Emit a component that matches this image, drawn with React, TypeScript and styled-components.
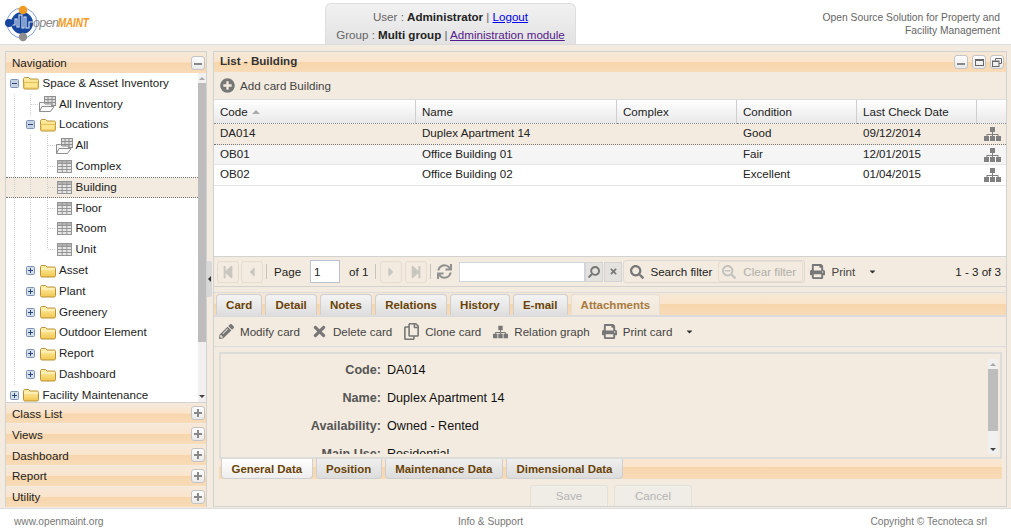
import React from "react";
import styled, { createGlobalStyle } from "styled-components";
import {
  FaPlusCircle,
  FaPencilAlt,
  FaTimes,
  FaRegCopy,
  FaPrint,
  FaSearch,
  FaSearchMinus,
  FaStepBackward,
  FaStepForward,
  FaCaretLeft,
  FaCaretRight,
  FaCaretDown,
  FaSync,
} from "react-icons/fa";

const BAND = "linear-gradient(to bottom, #f5e8d8 0%, #fbe4cb 48%, #f7d6ac 52%, #f8dbb8 100%)";
const LINE = "#d2d2d0";

const GlobalStyle = createGlobalStyle`
  html, body {
    margin: 0;
    padding: 0;
    background: #f3ebdf;
  }
  body {
    font-family: "Liberation Sans", Arial, sans-serif;
    font-size: 11.6px;
    color: #222;
    overflow: hidden;
  }
`;

type TreeNode = {
  label: string;
  depth: number;
  toggle?: "plus" | "minus";
  icon: "folder" | "table" | "view";
  selected?: boolean;
  end?: boolean;
};

const treeNodes: TreeNode[] = [
  { label: "Space & Asset Inventory", depth: 0, toggle: "minus", icon: "folder" },
  { label: "All Inventory", depth: 1, icon: "view" },
  { label: "Locations", depth: 1, toggle: "minus", icon: "folder" },
  { label: "All", depth: 2, icon: "view" },
  { label: "Complex", depth: 2, icon: "table" },
  { label: "Building", depth: 2, icon: "table", selected: true },
  { label: "Floor", depth: 2, icon: "table" },
  { label: "Room", depth: 2, icon: "table" },
  { label: "Unit", depth: 2, icon: "table", end: true },
  { label: "Asset", depth: 1, toggle: "plus", icon: "folder" },
  { label: "Plant", depth: 1, toggle: "plus", icon: "folder" },
  { label: "Greenery", depth: 1, toggle: "plus", icon: "folder" },
  { label: "Outdoor Element", depth: 1, toggle: "plus", icon: "folder" },
  { label: "Report", depth: 1, toggle: "plus", icon: "folder" },
  { label: "Dashboard", depth: 1, toggle: "plus", icon: "folder" },
  { label: "Facility Maintenance", depth: 0, toggle: "plus", icon: "folder" },
];

const accordionItems = ["Class List", "Views", "Dashboard", "Report", "Utility"];

const columns = ["Code", "Name", "Complex", "Condition", "Last Check Date", ""];

const buildings = [
  { code: "DA014", name: "Duplex Apartment 14", condition: "Good", date: "09/12/2014" },
  { code: "OB01", name: "Office Building 01", condition: "Fair", date: "12/01/2015" },
  { code: "OB02", name: "Office Building 02", condition: "Excellent", date: "01/04/2015" },
];

const cardTabs = ["Card", "Detail", "Notes", "Relations", "History", "E-mail"];
const formTabs = ["General Data", "Position", "Maintenance Data", "Dimensional Data"];
const fields = [
  ["Code", "DA014"],
  ["Name", "Duplex Apartment 14"],
  ["Availability", "Owned - Rented"],
  ["Main Use", "Residential"],
];

const FolderIcon = ({ open }: { open?: boolean }) => (
  <svg width="16" height="14" viewBox="0 0 16 14">
    <defs>
      <linearGradient id="fold" x1="0" y1="0" x2="0" y2="1">
        <stop offset="0" stopColor="#fff2b0" />
        <stop offset="1" stopColor="#f2c64e" />
      </linearGradient>
    </defs>
    <path
      d="M0.5 3.2 C0.5 2 1.1 1.5 2.1 1.5 H5.6 L7 3 H14 C15 3 15.5 3.5 15.5 4.4 V11.4 C15.5 12.4 15 13 14 13 H2 C1 13 0.5 12.4 0.5 11.4 Z"
      fill="url(#fold)"
      stroke="#b8923a"
    />
    {open ? (
      <path d="M1 6.5 H15 L14.8 12 H1.3 Z" fill="#fbe58e" stroke="#e6c25c" />
    ) : (
      <path d="M1.2 5 H14.8" stroke="#fff8d4" fill="none" />
    )}
  </svg>
);

const TableIcon = () => (
  <svg width="15" height="13" viewBox="0 0 15 13">
    <rect x="0.5" y="0.5" width="14" height="12" fill="#e6e6e6" stroke="#969696" />
    <rect x="1" y="1" width="13" height="2.5" fill="#b4b4b4" />
    <path d="M0.5 3.5H14.5M0.5 6.5H14.5M0.5 9.5H14.5M5.2 0.5V12.5M9.8 0.5V12.5" stroke="#969696" fill="none" />
  </svg>
);

const ViewIcon = () => (
  <svg width="17" height="16" viewBox="0 0 17 16">
    <rect x="5.5" y="0.5" width="11" height="9" fill="#dedede" stroke="#8e8e8e" />
    <path d="M5.5 3.5H16.5M5.5 6.5H16.5M9 0.5V9.5M13 0.5V9.5" stroke="#8e8e8e" fill="none" />
    <path d="M0.5 15.5 V6.5 H4.5 L6 8 H13 L11 15.5 Z" fill="#f4f4f4" stroke="#8e8e8e" />
    <path d="M0.5 15.5 L3 10.5 H15 L11.5 15.5 Z" fill="#fafafa" stroke="#8e8e8e" />
  </svg>
);

const ToggleBox = ({ type }: { type: "plus" | "minus" }) => (
  <svg width="9" height="9" viewBox="0 0 9 9">
    <rect x="0.5" y="0.5" width="8" height="8" rx="1" fill={type === "minus" ? "#c4d2e4" : "#d5dfec"} stroke="#7d93b3" />
    <path d={type === "minus" ? "M2 4.5H7" : "M2 4.5H7M4.5 2V7"} stroke="#2c4a78" fill="none" />
  </svg>
);

const RelationIcon = () => (
  <svg width="17" height="14" viewBox="0 0 17 14">
    <path
      d="M6 0h5v5H9v2h5.5v2H17v5h-5V9h1.5V8H9v1h2v5H6V9h2V8H3.5v1H5v5H0V9h2.5V7H8V5H6z"
      fill="currentColor"
    />
  </svg>
);

const RestoreIcon = () => (
  <svg width="10" height="9" viewBox="0 0 10 9">
    <path d="M3.5 2.5V0.5H9.5V5.5H7" fill="none" stroke="#666" />
    <rect x="0.5" y="3" width="6.5" height="5.5" fill="none" stroke="#666" />
    <path d="M0.5 3.5H7" stroke="#666" />
  </svg>
);

const Logo = () => (
  <svg width="36" height="40" viewBox="0 0 36 40">
    <circle cx="18" cy="19" r="15" fill="none" stroke="#7f9fd6" strokeWidth="1" />
    <circle cx="18" cy="19" r="11" fill="#15459c" />
    <path
      d="M8 21 H11 V15 H13 V23 H15 V11 H18 V24 H20 V13 H22 V24 H25 V18 H29"
      fill="none"
      stroke="#dfe8f7"
      strokeWidth="1.1"
    />
    <circle cx="19" cy="6" r="4.3" fill="#f49a1e" />
    <circle cx="19" cy="33" r="4.2" fill="#8e8e8e" />
    <circle cx="5" cy="19" r="4" fill="#15459c" />
  </svg>
);

const App = () => {
  return (
    <Page>
      <GlobalStyle />
      <Header>
        <Brand>
          <Logo />
          <BrandText>
            open<BrandStrong>MAINT</BrandStrong>
          </BrandText>
        </Brand>
        <UserBox>
          <UserLine>
            User : <b>Administrator</b> | <UserLink href="#">Logout</UserLink>
          </UserLine>
          <UserLine>
            Group : <b>Multi group</b> | <UserLink href="#" $visited>Administration module</UserLink>
          </UserLine>
        </UserBox>
        <Tagline>
          Open Source Solution for Property and
          <br />
          Facility Management
        </Tagline>
      </Header>

      <Workspace>
        <NavPanel>
          <NavHead>
            <span>Navigation</span>
            <ToolBtn>
              <MinusBar />
            </ToolBtn>
          </NavHead>
          <TreeArea>
            <TreeList>
              {treeNodes.map((node) => (
                <TreeRow key={node.label + node.depth} $selected={node.selected}>
                  {Array.from({ length: node.depth }).map((_, i) => (
                    <Guide key={i} />
                  ))}
                  {node.toggle ? (
                    <ToggleCell>
                      <ToggleBox type={node.toggle} />
                    </ToggleCell>
                  ) : (
                    <Elbow $end={node.end} />
                  )}
                  <IconCell>
                    {node.icon === "folder" && <FolderIcon open={node.toggle === "minus"} />}
                    {node.icon === "table" && <TableIcon />}
                    {node.icon === "view" && <ViewIcon />}
                  </IconCell>
                  <TreeLabel>{node.label}</TreeLabel>
                </TreeRow>
              ))}
            </TreeList>
            <ScrollTrack $width={8}>
              <ScrollUp />
              <ScrollThumb $height={259} />
              <ScrollSpace />
              <ScrollDown />
            </ScrollTrack>
          </TreeArea>
          {accordionItems.map((item) => (
            <AccordionHead key={item}>
              <span>{item}</span>
              <ToolBtn>
                <PlusMark />
              </ToolBtn>
            </AccordionHead>
          ))}
        </NavPanel>

        <Splitter>
          <SplitHandle />
        </Splitter>

        <MainPanel>
          <TitleBar>
            <span>List - Building</span>
            <TitleTools>
              <ToolBtn>
                <MinusBar />
              </ToolBtn>
              <ToolBtn>
                <MaxMark />
              </ToolBtn>
              <ToolBtn>
                <RestoreIcon />
              </ToolBtn>
            </TitleTools>
          </TitleBar>

          <AddBar>
            <ToolIcon $size={15}>
              <FaPlusCircle />
            </ToolIcon>
            <span>Add card Building</span>
          </AddBar>

          <GridArea>
            <GridHeader>
              {columns.map((col, i) => (
                <HeaderCell key={i}>
                  {col}
                  {col === "Code" && <SortMark />}
                </HeaderCell>
              ))}
            </GridHeader>
            {buildings.map((b, i) => (
              <GridRow key={b.code} $selected={i === 0} $alt={i === 1}>
                <GridCell>{b.code}</GridCell>
                <GridCell>{b.name}</GridCell>
                <GridCell />
                <GridCell>{b.condition}</GridCell>
                <GridCell>{b.date}</GridCell>
                <RelCell>
                  <RelationIcon />
                </RelCell>
              </GridRow>
            ))}
          </GridArea>

          <PagingBar>
            <PageBtn $ml={3}>
              <FaStepBackward />
            </PageBtn>
            <PageBtn $ml={2}>
              <FaCaretLeft />
            </PageBtn>
            <PageSep $ml={3} />
            <PageText $ml={7}>Page</PageText>
            <PageInput $ml={9}>1</PageInput>
            <PageText $ml={9}>of 1</PageText>
            <PageSep $ml={7} />
            <PageBtn $ml={4}>
              <FaCaretRight />
            </PageBtn>
            <PageBtn $ml={3}>
              <FaStepForward />
            </PageBtn>
            <PageSep $ml={3} />
            <RefreshIcon>
              <FaSync />
            </RefreshIcon>
            <SearchInput />
            <SearchBtn>
              <FaSearch />
            </SearchBtn>
            <SearchBtn $clear>
              <FaTimes />
            </SearchBtn>
            <FilterGroup>
              <ToolIcon $size={14}>
                <FaSearch />
              </ToolIcon>
              <FilterLabel>Search filter</FilterLabel>
              <ClearFilter>
                <FaSearchMinus />
                <span>Clear filter</span>
              </ClearFilter>
            </FilterGroup>
            <PrintBtn>
              <ToolIcon $size={15}>
                <FaPrint />
              </ToolIcon>
              <span>Print</span>
              <Caret>
                <FaCaretDown />
              </Caret>
            </PrintBtn>
            <PageCount>1 - 3 of 3</PageCount>
          </PagingBar>

          <CardTabBar>
            {cardTabs.map((tab) => (
              <CardTab key={tab}>{tab}</CardTab>
            ))}
            <CardTab $disabled>Attachments</CardTab>
          </CardTabBar>

          <CardToolbar>
            <CardTool>
              <ToolSlot>
                <FaPencilAlt />
              </ToolSlot>
              Modify card
            </CardTool>
            <CardTool>
              <ToolSlot $size={17}>
                <FaTimes />
              </ToolSlot>
              Delete card
            </CardTool>
            <CardTool>
              <ToolSlot $size={17}>
                <FaRegCopy />
              </ToolSlot>
              Clone card
            </CardTool>
            <CardTool>
              <ToolSlot>
                <RelationIcon />
              </ToolSlot>
              Relation graph
            </CardTool>
            <CardTool>
              <ToolSlot>
                <FaPrint />
              </ToolSlot>
              Print card
              <Caret>
                <FaCaretDown />
              </Caret>
            </CardTool>
          </CardToolbar>

          <FormSection>
            <FormBox>
              <FormBody>
                {fields.map(([label, value]) => (
                  <FormRow key={label}>
                    <FormLabel>{label}:</FormLabel>
                    <FormValue>{value}</FormValue>
                  </FormRow>
                ))}
              </FormBody>
              <FormScroll>
                <ScrollTrack $width={10}>
                  <ScrollUp />
                  <ScrollThumb $height={62} />
                  <ScrollSpace />
                  <ScrollDown />
                </ScrollTrack>
              </FormScroll>
            </FormBox>
            <FormTabBar>
              {formTabs.map((tab, i) => (
                <FormTab key={tab} $active={i === 0}>
                  {tab}
                </FormTab>
              ))}
            </FormTabBar>
            <ButtonRow>
              <FormButton>Save</FormButton>
              <FormButton>Cancel</FormButton>
            </ButtonRow>
          </FormSection>
        </MainPanel>
      </Workspace>

      <Footer>
        <span>www.openmaint.org</span>
        <FooterMid>Info &amp; Support</FooterMid>
        <FooterRight>Copyright © Tecnoteca srl</FooterRight>
      </Footer>
    </Page>
  );
};

export default App;

const Page = styled.div`
  width: 1011px;
  height: 529px;
  display: flex;
  flex-direction: column;
  overflow: hidden;
`;
const Header = styled.header`
  height: 44px;
  flex: none;
  background: #fff;
  border-bottom: 1px solid #dcdcdc;
  display: grid;
  grid-template-columns: 325px 251px 1fr;
`;
const Brand = styled.div`
  display: flex;
  align-items: center;
  padding: 3px 0 0 4px;
`;
const BrandText = styled.div`
  font-size: 12.5px;
  font-style: italic;
  color: #8a8a8a;
  letter-spacing: -0.6px;
  margin: 0 0 2px -7px;
`;
const BrandStrong = styled.span`
  display: inline-block;
  font-size: 13.5px;
  letter-spacing: -0.3px;
  color: #f59a1c;
  font-weight: bold;
  transform: scaleX(0.74);
  transform-origin: left center;
`;
const UserBox = styled.div`
  margin-top: 3px;
  border: 1px solid #dedede;
  border-bottom: none;
  border-radius: 6px 6px 0 0;
  background: linear-gradient(to bottom, #f1f1f1, #e2e2e2);
  text-align: center;
  color: #666;
  padding-top: 4px;
`;
const UserLine = styled.div`
  line-height: 18px;
  b {
    color: #222;
  }
`;
const UserLink = styled.a<{ $visited?: boolean }>`
  color: ${({ $visited }) => ($visited ? "#551a8b" : "#0000ee")};
  text-decoration: underline;
`;
const Tagline = styled.div`
  font-size: 10.3px;
  line-height: 13px;
  color: #666;
  text-align: right;
  padding: 11px 11px 0 0;
`;
const Workspace = styled.div`
  flex: 1;
  min-height: 0;
  display: flex;
  padding: 6px 4px 1px 5px;
`;
const NavPanel = styled.aside`
  width: 202px;
  box-sizing: border-box;
  border: 1px solid ${LINE};
  display: flex;
  flex-direction: column;
`;
const NavHead = styled.div`
  height: 21px;
  flex: none;
  display: flex;
  align-items: center;
  justify-content: space-between;
  padding: 0 1px 0 6px;
  background: ${BAND};
`;
const AccordionHead = styled.div`
  height: 19.8px;
  flex: none;
  margin-top: 1px;
  display: flex;
  align-items: center;
  justify-content: space-between;
  padding: 0 1px 0 6px;
  background: ${BAND};
`;
const ToolBtn = styled.div`
  width: 14px;
  height: 14px;
  box-sizing: border-box;
  border: 1px solid #c4c4c4;
  border-radius: 3px;
  background: linear-gradient(to bottom, #fdfdfd, #e9e9e9);
  display: flex;
  align-items: center;
  justify-content: center;
`;
const MinusBar = styled.span`
  width: 8px;
  height: 2px;
  margin-top: 3px;
  background: #888;
`;
const PlusMark = styled.span`
  width: 8px;
  height: 8px;
  background:
    linear-gradient(#888, #888) center / 8px 2px no-repeat,
    linear-gradient(#888, #888) center / 2px 8px no-repeat;
`;
const MaxMark = styled.span`
  width: 9px;
  height: 7px;
  border: 1px solid #666;
  border-top-width: 2px;
  box-sizing: border-box;
`;
const TreeArea = styled.div`
  height: 329.6px;
  flex: none;
  display: flex;
  background: #fff;
  overflow: hidden;
  border-bottom: 1px solid ${LINE};
  box-sizing: border-box;
`;
const TreeList = styled.div`
  flex: 1;
  min-width: 0;
`;
const TreeRow = styled.div<{ $selected?: boolean }>`
  height: 20.8px;
  box-sizing: border-box;
  display: flex;
  align-items: stretch;
  background: ${({ $selected }) => ($selected ? "#f3ebdf" : "transparent")};
  ${({ $selected }) =>
    $selected ? "border-top: 1px dotted #777; border-bottom: 1px dotted #777;" : ""}
`;
const Guide = styled.span`
  width: 16.5px;
  flex: none;
  background: repeating-linear-gradient(to bottom, #d0d0d0 0 1px, transparent 1px 2px) center / 1px 100% no-repeat;
`;
const Elbow = styled.span<{ $end?: boolean }>`
  width: 16.5px;
  flex: none;
  background:
    repeating-linear-gradient(to bottom, #d0d0d0 0 1px, transparent 1px 2px) center top / 1px ${({ $end }) => ($end ? "50%" : "100%")} no-repeat,
    repeating-linear-gradient(to right, #d0d0d0 0 1px, transparent 1px 2px) right center / 8px 1px no-repeat;
`;
const ToggleCell = styled.span`
  width: 16.5px;
  flex: none;
  display: flex;
  align-items: center;
  justify-content: center;
`;
const IconCell = styled.span`
  width: 17px;
  flex: none;
  display: flex;
  align-items: center;
  justify-content: center;
`;
const TreeLabel = styled.span`
  align-self: center;
  margin: -1px 0 0 3px;
  line-height: 14px;
  white-space: nowrap;
`;
const ScrollTrack = styled.div<{ $width: number }>`
  width: ${({ $width }) => $width}px;
  flex: none;
  height: 100%;
  background: #f0f0f0;
  display: flex;
  flex-direction: column;
`;
const ScrollUp = styled.span`
  height: 10px;
  flex: none;
  display: flex;
  align-items: center;
  justify-content: center;
  &::before {
    content: "";
    border: 3px solid transparent;
    border-bottom-color: #a8a8a8;
    border-top-width: 0;
  }
`;
const ScrollDown = styled.span`
  height: 10px;
  flex: none;
  display: flex;
  align-items: center;
  justify-content: center;
  &::before {
    content: "";
    border: 3px solid transparent;
    border-top-color: #444;
    border-bottom-width: 0;
  }
`;
const ScrollThumb = styled.span<{ $height: number }>`
  height: ${({ $height }) => $height}px;
  flex: none;
  background: #bdbdbd;
`;
const ScrollSpace = styled.span`
  flex: 1;
`;
const Splitter = styled.div`
  width: 6px;
  flex: none;
  display: flex;
  align-items: center;
`;
const SplitHandle = styled.div`
  width: 5px;
  height: 36px;
  background: #d8d8d8;
  border-radius: 0 2px 2px 0;
  display: flex;
  align-items: center;
  &::before {
    content: "";
    border: 3px solid transparent;
    border-right-color: #333;
    border-left-width: 0;
    margin-left: 1px;
  }
`;
const MainPanel = styled.main`
  width: 794px;
  box-sizing: border-box;
  border: 1px solid ${LINE};
  display: flex;
  flex-direction: column;
`;
const TitleBar = styled.div`
  height: 20px;
  flex: none;
  box-sizing: border-box;
  display: flex;
  align-items: center;
  justify-content: space-between;
  padding: 0 2px 3px 6px;
  background: ${BAND};
  font-weight: bold;
  color: #333;
`;
const TitleTools = styled.div`
  display: flex;
  gap: 4px;
  margin-top: 3px;
`;
const AddBar = styled.div`
  height: 28px;
  flex: none;
  box-sizing: border-box;
  padding-left: 6px;
  display: flex;
  align-items: center;
  gap: 5px;
  color: #444;
  border-bottom: 1px solid #dcdcdc;
`;
const ToolIcon = styled.span<{ $size: number }>`
  display: inline-flex;
  font-size: ${({ $size }) => $size}px;
  color: #777;
`;
const ToolSlot = styled.span<{ $size?: number }>`
  width: 15px;
  flex: none;
  display: inline-flex;
  justify-content: center;
  font-size: ${({ $size }) => $size ?? 15}px;
  color: #777;
`;
const GridArea = styled.div`
  height: 157px;
  flex: none;
  background: #fff;
  border-bottom: 1px solid ${LINE};
  box-sizing: border-box;
`;
const GRID_COLUMNS = "202px 201px 120px 120px 120px 1fr";
const GridHeader = styled.div`
  height: 24px;
  display: grid;
  grid-template-columns: ${GRID_COLUMNS};
`;
const HeaderCell = styled.div`
  box-sizing: border-box;
  padding-left: 6px;
  line-height: 23px;
  background: linear-gradient(to bottom, #ffffff, #e9e9e9);
  border-right: 1px solid #cfcfcf;
  border-bottom: 1px dotted #888;
  &:last-child {
    border-right: none;
  }
`;
const SortMark = styled.span`
  display: inline-block;
  margin-left: 4px;
  vertical-align: 2px;
  border: 4px solid transparent;
  border-bottom-color: #aaa;
  border-top-width: 0;
`;
const GridRow = styled.div<{ $selected?: boolean; $alt?: boolean }>`
  height: 20.7px;
  box-sizing: border-box;
  display: grid;
  grid-template-columns: ${GRID_COLUMNS};
  background: ${({ $selected, $alt }) => ($selected ? "#f3ebdf" : $alt ? "#f5f5f5" : "#fff")};
  border-bottom: ${({ $selected }) => ($selected ? "1px dotted #777" : "1px solid #e6e6e6")};
`;
const GridCell = styled.div`
  padding-left: 6px;
  line-height: 18px;
  white-space: nowrap;
`;
const RelCell = styled.div`
  display: flex;
  align-items: center;
  justify-content: flex-end;
  padding-right: 5.5px;
  color: #808080;
`;
const PagingBar = styled.div`
  height: 30px;
  flex: none;
  box-sizing: border-box;
  display: flex;
  align-items: center;
  border-bottom: 1px solid ${LINE};
`;
const PageBtn = styled.span<{ $ml: number }>`
  width: 22px;
  height: 22px;
  flex: none;
  box-sizing: border-box;
  margin-left: ${({ $ml }) => $ml}px;
  border: 1px solid #e6ddcf;
  border-radius: 3px;
  display: flex;
  align-items: center;
  justify-content: center;
  font-size: 14px;
  color: #c9c6c0;
`;
const PageSep = styled.span<{ $ml: number }>`
  width: 1px;
  height: 15px;
  flex: none;
  margin-left: ${({ $ml }) => $ml}px;
  background: #c8c4bc;
`;
const PageText = styled.span<{ $ml: number }>`
  margin-left: ${({ $ml }) => $ml}px;
`;
const PageInput = styled.span<{ $ml: number }>`
  width: 30px;
  height: 23px;
  flex: none;
  box-sizing: border-box;
  margin-left: ${({ $ml }) => $ml}px;
  padding-left: 3px;
  line-height: 21px;
  background: #fff;
  border: 1px solid #b9c2d3;
`;
const RefreshIcon = styled.span`
  display: flex;
  margin-left: 6px;
  font-size: 15px;
  color: #929292;
`;
const SearchInput = styled.span`
  width: 126px;
  height: 20px;
  flex: none;
  box-sizing: border-box;
  margin-left: 7px;
  background: #fff;
  border: 1px solid #cfd4de;
`;
const SearchBtn = styled.span<{ $clear?: boolean }>`
  width: 18px;
  height: 20px;
  flex: none;
  box-sizing: border-box;
  margin-left: ${({ $clear }) => ($clear ? "1px" : "0")};
  background: #e4e2de;
  border: 1px solid #d4d4d4;
  display: flex;
  align-items: center;
  justify-content: center;
  font-size: ${({ $clear }) => ($clear ? "9px" : "12px")};
  color: #777;
  svg {
    transform: ${({ $clear }) => ($clear ? "none" : "scaleX(-1)")};
  }
`;
const FilterGroup = styled.div`
  width: 182px;
  height: 23px;
  flex: none;
  box-sizing: border-box;
  margin-left: 1px;
  padding-left: 6px;
  border: 1px solid #dcd9d3;
  border-radius: 3px;
  display: flex;
  align-items: center;
`;
const FilterLabel = styled.span`
  margin-left: 6px;
`;
const ClearFilter = styled.span`
  width: 85px;
  height: 21px;
  box-sizing: border-box;
  margin-left: 6px;
  padding-left: 3px;
  display: flex;
  align-items: center;
  gap: 7px;
  border: 1px solid #e6ddcf;
  border-radius: 3px;
  color: #b0aeaa;
  svg {
    font-size: 14px;
    color: #c4c2bd;
  }
`;
const PrintBtn = styled.span`
  display: flex;
  align-items: center;
  gap: 6px;
  margin-left: 5px;
  color: #444;
`;
const Caret = styled.span`
  display: inline-flex;
  margin-left: 7px;
  font-size: 9px;
  color: #333;
`;
const PageCount = styled.span`
  margin-left: auto;
  padding-right: 5px;
`;
const CardTabBar = styled.div`
  height: 25px;
  flex: none;
  box-sizing: border-box;
  margin-top: 5px;
  padding-left: 2px;
  display: flex;
  align-items: flex-end;
  gap: 3px;
  background: ${BAND};
  border-top: 1px solid #dcdcdc;
  border-bottom: 2px solid #dcdcdc;
`;
const CardTab = styled.span<{ $disabled?: boolean }>`
  height: 21px;
  box-sizing: border-box;
  padding: 0 9.1px;
  line-height: 20px;
  font-size: 11.5px;
  font-weight: bold;
  color: ${({ $disabled }) => ($disabled ? "#a87a40" : "#6a4204")};
  background: ${({ $disabled }) =>
    $disabled ? "linear-gradient(to bottom, #f7efe5, #f0e6d9)" : "linear-gradient(to bottom, #f4f4f4, #dedede)"};
  border: 1px solid ${({ $disabled }) => ($disabled ? "#e6dfd4" : "#cfcfcf")};
  border-bottom: none;
  border-radius: 4px 4px 0 0;
`;
const CardToolbar = styled.div`
  height: 30px;
  flex: none;
  box-sizing: border-box;
  padding-left: 5px;
  display: flex;
  align-items: center;
  gap: 12px;
  color: #444;
  border-bottom: 1px solid #dcdcdc;
`;
const CardTool = styled.span`
  display: inline-flex;
  align-items: center;
  gap: 6px;
`;
const FormSection = styled.section`
  flex: 1;
  min-height: 0;
  padding: 5px 4px 0 5px;
  display: flex;
  flex-direction: column;
`;
const FormBox = styled.div`
  height: 107px;
  flex: none;
  box-sizing: border-box;
  border: 2px solid #dcdcd8;
  display: flex;
  padding-bottom: 3px;
`;
const FormBody = styled.div`
  flex: 1;
  min-width: 0;
  padding-top: 2px;
  overflow: hidden;
`;
const FormRow = styled.div`
  height: 28px;
  display: flex;
  align-items: center;
  gap: 6px;
  font-size: 12.6px;
`;
const FormLabel = styled.span`
  width: 160px;
  text-align: right;
  font-weight: bold;
  color: #555;
`;
const FormValue = styled.span`
  color: #111;
`;
const FormScroll = styled.div`
  margin: 5px 2px 0 0;
`;
const FormTabBar = styled.div`
  height: 20px;
  flex: none;
  padding-left: 2px;
  display: flex;
  gap: 3px;
  background: linear-gradient(to bottom, #f9e7d3 0%, #fbe4cb 38%, #f7d6ac 42%, #f8dbb8 100%);
`;
const FormTab = styled.span<{ $active?: boolean }>`
  box-sizing: border-box;
  padding: 0 9.5px;
  line-height: 20px;
  font-size: 11.45px;
  font-weight: bold;
  color: #6a4204;
  background: ${({ $active }) =>
    $active ? "linear-gradient(to bottom, #ffffff, #ededed)" : "linear-gradient(to bottom, #efefef, #dcdcdc)"};
  border: 1px solid #cfcfcf;
  border-top: none;
  border-radius: 0 0 4px 4px;
`;
const ButtonRow = styled.div`
  margin-top: 6px;
  padding-left: 311px;
  display: flex;
  gap: 6px;
`;
const FormButton = styled.span`
  width: 78px;
  height: 21px;
  box-sizing: border-box;
  text-align: center;
  line-height: 20px;
  color: #b4b4b4;
  background: #f0ede7;
  border: 1px solid #e4e1db;
  border-bottom: none;
  border-radius: 3px 3px 0 0;
`;
const Footer = styled.footer`
  height: 16px;
  flex: none;
  background: #fff;
  border-top: 1px solid #dcdcdc;
  padding: 4px 0 0 14px;
  display: flex;
  align-items: center;
  font-size: 10.2px;
  color: #777;
`;
const FooterMid = styled.span`
  margin-left: 354.5px;
`;
const FooterRight = styled.span`
  margin-left: auto;
  padding-right: 24px;
`;
